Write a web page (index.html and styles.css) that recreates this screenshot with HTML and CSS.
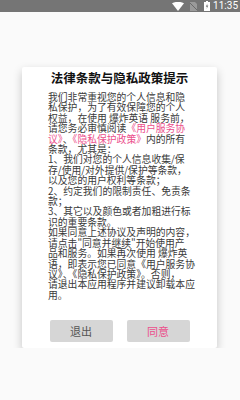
FILE: index.html
```html
<!DOCTYPE html>
<html lang="zh-CN">
  <head>
    <meta charset="UTF-8" />
    <meta name="viewport" content="width=device-width, initial-scale=1.0" />
    <title>法律条款与隐私政策提示</title>
    <link rel="stylesheet" href="styles.css">
  </head>
  <body>
    <div class="status-bar">
      <svg class="icon-wifi" width="12" height="9" viewBox="0 0 12 9">
        <path d="M0 1.2 Q6 -1.6 12 1.2 L6 9 Z" fill="#fff" />
      </svg>
      <svg class="icon-sim" width="7" height="9" viewBox="0 0 7 9">
        <path d="M0 0 H5 L7 2 V9 H0 Z" fill="#9a9a9a" />
        <path d="M0 1 L7 8" stroke="#6a6a6a" stroke-width="1" />
      </svg>
      <svg class="icon-battery" width="6" height="10" viewBox="0 0 6 10">
        <rect x="2" y="0" width="2" height="1" fill="#fff" />
        <rect x="0" y="1" width="6" height="9" fill="#fff" />
        <path d="M3.4 2.5 L1.8 5.8 H3 L2.6 8 L4.3 4.6 H3.1 Z" fill="#757575" />
      </svg>
      <span class="time">11:35</span>
    </div>

    <div class="dialog">
      <div class="dialog-title">法律条款与隐私政策提示</div>
      <div class="dialog-text">
        我们非常重视您的个人信息和隐<br>
        私保护，为了有效保障您的个人<br>
        权益，在使用 爆炸英语 服务前，<br>
        请您务必审慎阅读<span class="link">《用户服务协</span><br>
        <span class="link">议》</span>、<span class="link">《隐私保护政策》</span>内的所有<br>
        条款，尤其是：<br>
        1、我们对您的个人信息收集/保<br>
        存/使用/对外提供/保护等条款，<br>
        以及您的用户权利等条款；<br>
        2、约定我们的限制责任、免责条<br>
        款；<br>
        3、其它以及颜色或者加粗进行标<br>
        识的重要条款。<br>
        如果同意上述协议及声明的内容，<br>
        请点击"同意并继续"开始使用产<br>
        品和服务。如果再次使用 爆炸英<br>
        语，即表示您已同意《用户服务协<br>
        议》、《隐私保护政策》。否则，<br>
        请退出本应用程序并建议卸载本应<br>
        用。
      </div>
      <div class="dialog-buttons">
        <button class="btn btn-exit">退出</button>
        <button class="btn btn-agree">同意</button>
      </div>
    </div>
  </body>
</html>
```

FILE: styles.css
```css
body {
    margin: 0;
    background-color: #fafafa;
    font-family: "Noto Sans CJK SC", "Noto Sans", sans-serif;
}

.status-bar {
    height: 12px;
    background-color: #757575;
    display: flex;
    align-items: center;
    justify-content: flex-end;
    padding-right: 2px;
}

.icon-wifi {
    margin-right: 6px;
}

.icon-sim {
    margin-right: 7px;
}

.icon-battery {
    margin-right: 3px;
}

.time {
    color: #fff;
    font-family: Roboto, sans-serif;
    font-size: 10px;
    line-height: 12px;
}

.dialog {
    width: 195px;
    margin: 55px 0 0 22px;
    background-color: #fff;
    border-radius: 2px;
    box-shadow: 0 4px 10px rgba(0, 0, 0, 0.22);
    padding: 4px 0 6px;
}

.dialog-title {
    text-align: center;
    font-size: 12.5px;
    font-weight: bold;
    color: #111;
    line-height: 13px;
}

.dialog-text {
    margin: 8px 0 0 26px;
    font-size: 9.8px;
    line-height: 10.4px;
    color: #3a3a3a;
    white-space: nowrap;
}

.link {
    color: #ec4f8c;
}

.dialog-buttons {
    display: flex;
    justify-content: center;
    gap: 14px;
    margin-top: 20px;
}

.btn {
    width: 63px;
    height: 22px;
    border: none;
    border-radius: 2px;
    background-color: #d6d6d6;
    font-family: "Noto Sans CJK SC", sans-serif;
    font-size: 11px;
    padding: 0;
}

.btn-exit {
    color: #555;
}

.btn-agree {
    color: #ec4f8c;
}
```
